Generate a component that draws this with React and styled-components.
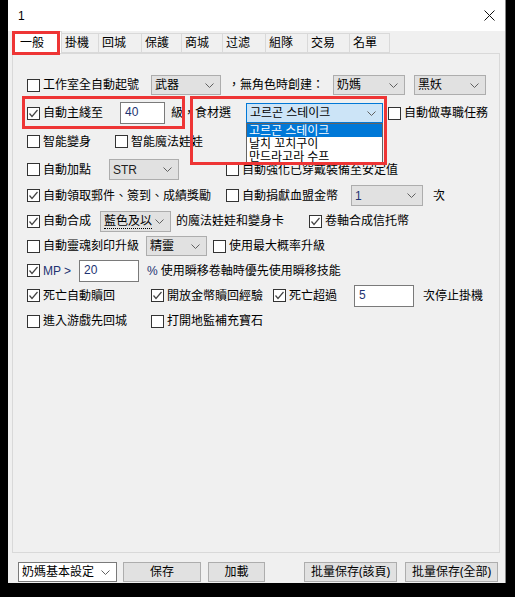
import React from "react";
import styled, { createGlobalStyle, css } from "styled-components";

const FONT = `"Noto Sans", "Noto Sans CJK TC", "Noto Sans CJK KR", sans-serif`;

const GlobalStyle = createGlobalStyle`
  html, body {
    margin: 0;
    padding: 0;
    background: #000;
  }
  body {
    padding-left: 8px;
    font-family: ${FONT};
    font-size: 12px;
    color: #000;
  }
`;

const Window = styled.div`
  position: relative;
  width: 498px;
  height: 583px;
  background: #f0f0f0;
  display: flex;
  flex-direction: column;
  box-sizing: border-box;
  border-right: 1px solid #888;
`;

const TitleBar = styled.div`
  height: 31px;
  background: #fff;
  display: flex;
  align-items: center;
  justify-content: space-between;
  padding: 0 10px 0 10px;
  font-family: "Liberation Sans", sans-serif;
  font-size: 12px;
`;

const Tabs = styled.div`
  display: flex;
  align-items: flex-end;
  height: 22px;
  margin-left: 6px;
  margin-top: 0;
`;

const Tab = styled.div`
  box-sizing: border-box;
  width: ${(p) => p.$w}px;
  height: ${(p) => (p.$active ? 22 : 20)}px;
  display: flex;
  align-items: center;
  padding-left: ${(p) => (p.$active ? 5 : 3)}px;
  background: ${(p) => (p.$active ? "#fff" : "#f0f0f0")};
  border: 1px solid #d9d9d9;
  border-bottom: ${(p) => (p.$active ? "none" : "1px solid #d9d9d9")};
  border-left: ${(p) => (p.$first || p.$active ? "1px solid #d9d9d9" : "none")};
  font-size: 12px;
  line-height: 14px;
`;

const Panel = styled.div`
  box-sizing: border-box;
  margin-left: 4px;
  width: 488px;
  height: 500px;
  border: 1px solid #d9d9d9;
  border-top-color: #d9d9d9;
  padding: 17px 0 0 14px;
  display: flex;
  flex-direction: column;
`;

const Row = styled.div`
  display: flex;
  align-items: center;
  height: ${(p) => p.$h}px;
`;

const CheckWrap = styled.label`
  display: flex;
  align-items: center;
  flex-shrink: 0;
  width: ${(p) => (p.$w ? `${p.$w}px` : "auto")};
  margin-left: ${(p) => p.$ml || 0}px;
  line-height: 14px;
  white-space: nowrap;
`;

const Box = styled.span`
  box-sizing: border-box;
  width: 13px;
  height: 13px;
  border: 1px solid #333;
  background: #fff;
  margin-right: 3px;
  display: flex;
  align-items: center;
  justify-content: center;
`;

const Latin = styled.span`
  font-family: "Liberation Sans", sans-serif;
  color: #1d3372;
`;

const Text = styled.span`
  flex-shrink: 0;
  width: ${(p) => (p.$w ? `${p.$w}px` : "auto")};
  margin-left: ${(p) => p.$ml || 0}px;
  line-height: 14px;
  white-space: nowrap;
`;

const selectLook = {
  plain: css`
    background: #e1e1e1;
    border: 1px solid #adadad;
  `,
  focus: css`
    background: #cce4f7;
    border: 1px solid #0078d7;
  `,
  white: css`
    background: #fff;
    border: 1px solid #7a7a7a;
  `,
};

const SelectBox = styled.div`
  box-sizing: border-box;
  flex-shrink: 0;
  width: ${(p) => p.$w}px;
  height: ${(p) => p.$h || 20}px;
  margin-left: ${(p) => p.$ml || 0}px;
  display: flex;
  align-items: center;
  justify-content: space-between;
  padding: 0 6px 0 3px;
  line-height: 14px;
  white-space: nowrap;
  ${(p) => selectLook[p.$look || "plain"]}
`;

const SelectValue = styled.span`
  ${(p) =>
    p.$dotted &&
    css`
      border-bottom: 1px dotted #000;
    `}
`;

const Input = styled.div`
  box-sizing: border-box;
  flex-shrink: 0;
  width: ${(p) => p.$w}px;
  height: 22px;
  margin-left: ${(p) => p.$ml || 0}px;
  background: #fff;
  border: 1px solid #7a7a7a;
  padding: 2px 0 0 4px;
  font-family: "Liberation Sans", sans-serif;
  font-size: 12px;
  line-height: 14px;
  color: #1d3372;
`;

const BottomBar = styled.div`
  display: flex;
  align-items: center;
  height: 20px;
  margin-top: 9px;
  padding-left: 10px;
`;

const Button = styled.div`
  box-sizing: border-box;
  flex-shrink: 0;
  width: ${(p) => p.$w}px;
  height: 20px;
  margin-left: ${(p) => p.$ml || 0}px;
  background: #e1e1e1;
  border: 1px solid #adadad;
  display: flex;
  align-items: center;
  justify-content: center;
  line-height: 14px;
`;

const Mark = styled.div`
  position: absolute;
  left: ${(p) => p.$x}px;
  top: ${(p) => p.$y}px;
  width: ${(p) => p.$w}px;
  height: ${(p) => p.$h}px;
  box-sizing: border-box;
  border: 3px solid #ee3535;
  pointer-events: none;
`;

const DropList = styled.div`
  position: absolute;
  left: 238px;
  top: 123px;
  width: 137px;
  box-sizing: border-box;
  background: #fff;
  border: 1px solid #646464;
  display: flex;
  flex-direction: column;
`;

const DropItem = styled.div`
  height: 13px;
  line-height: 13px;
  padding-left: 2px;
  font-size: 12px;
  background: ${(p) => (p.$active ? "#0078d7" : "#fff")};
  color: ${(p) => (p.$active ? "#fff" : "#000")};
`;

const Chevron = () => (
  <svg width="9" height="5" viewBox="0 0 9 5">
    <path d="M0.5 0.5 L4.5 4.5 L8.5 0.5" fill="none" stroke="#606060" strokeWidth="1" />
  </svg>
);

const Close = () => (
  <svg width="11" height="11" viewBox="0 0 11 11">
    <path d="M0.5 0.5 L10.5 10.5 M10.5 0.5 L0.5 10.5" stroke="#111" strokeWidth="1" />
  </svg>
);

const Check = ({ checked, w, ml, children }) => (
  <CheckWrap $w={w} $ml={ml}>
    <Box>
      {checked && (
        <svg width="11" height="11" viewBox="0 0 11 11">
          <polyline points="1.5,5.5 4,8.5 9.5,2" fill="none" stroke="#444" strokeWidth="1.2" />
        </svg>
      )}
    </Box>
    {children}
  </CheckWrap>
);

const Select = ({ w, h, ml, look, dotted, children }) => (
  <SelectBox $w={w} $h={h} $ml={ml} $look={look}>
    <SelectValue $dotted={dotted}>{children}</SelectValue>
    <Chevron />
  </SelectBox>
);

const tabs = [
  ["一般", 48],
  ["掛機", 37],
  ["回城", 43],
  ["保護", 40],
  ["商城", 41],
  ["过滤", 43],
  ["組隊", 42],
  ["交易", 42],
  ["名單", 40],
];

export default function App() {
  return (
    <>
      <GlobalStyle />
      <Window>
        <TitleBar>
          <span>1</span>
          <Close />
        </TitleBar>
        <Tabs>
          {tabs.map(([name, w], i) => (
            <Tab key={name} $w={w} $active={i === 0} $first={i === 0}>
              {name}
            </Tab>
          ))}
        </Tabs>
        <Panel>
          <Row $h={28}>
            <Check w={124}>工作室全自動起號</Check>
            <Select w={70}>武器</Select>
            <Text $ml={7} $w={105}>，無角色時創建：</Text>
            <Select w={72}>奶媽</Select>
            <Select w={72} ml={9}>黑妖</Select>
          </Row>
          <Row $h={28}>
            <Check checked w={93}>自動主綫至</Check>
            <Input $w={45}>40</Input>
            <Text $ml={6} $w={75}>級，食材選</Text>
            <Select w={137} look="focus">고르곤 스테이크</Select>
            <Check ml={5}>自動做專職任務</Check>
          </Row>
          <Row $h={29}>
            <Check w={88}>智能變身</Check>
            <Check>智能魔法娃娃</Check>
          </Row>
          <Row $h={27}>
            <Check w={82}>自動加點</Check>
            <Select w={70} h={21}><Latin style={{ color: "#222" }}>STR</Latin></Select>
            <Check ml={47}>自動強化已穿戴裝備至安定值</Check>
          </Row>
          <Row $h={25}>
            <Check checked w={199}>自動領取郵件、簽到、成績獎勵</Check>
            <Check w={125}>自動捐獻血盟金幣</Check>
            <Select w={72} h={21}><Latin>1</Latin></Select>
            <Text $ml={10}>次</Text>
          </Row>
          <Row $h={26}>
            <Check checked w={73}>自動合成</Check>
            <Select w={71} h={21} dotted>藍色及以</Select>
            <Text $ml={5} $w={133}>的魔法娃娃和變身卡</Text>
            <Check checked>卷軸合成信托幣</Check>
          </Row>
          <Row $h={24}>
            <Check w={119}>自動靈魂刻印升級</Check>
            <Select w={61}>精靈</Select>
            <Check ml={6}>使用最大概率升級</Check>
          </Row>
          <Row $h={25}>
            <Check checked w={52}><Latin>MP &gt;</Latin></Check>
            <Input $w={60}>20</Input>
            <Text $ml={8}><Latin>%</Latin> 使用瞬移卷軸時優先使用瞬移技能</Text>
          </Row>
          <Row $h={25}>
            <Check checked w={124}>死亡自動贖回</Check>
            <Check checked w={122}>開放金幣贖回經驗</Check>
            <Check checked w={81}>死亡超過</Check>
            <Input $w={60}>5</Input>
            <Text $ml={9}>次停止掛機</Text>
          </Row>
          <Row $h={26}>
            <Check w={124}>進入游戲先回城</Check>
            <Check>打開地監補充寶石</Check>
          </Row>
        </Panel>
        <BottomBar>
          <Select w={99} look="white">奶媽基本設定</Select>
          <Button $w={78} $ml={6}>保存</Button>
          <Button $w={57} $ml={7}>加載</Button>
          <Button $w={93} $ml={39}>批量保存(該頁)</Button>
          <Button $w={93} $ml={8}>批量保存(全部)</Button>
        </BottomBar>

        <DropList>
          <DropItem $active>고르곤 스테이크</DropItem>
          <DropItem>날치 꼬치구이</DropItem>
          <DropItem>만드라고라 수프</DropItem>
        </DropList>
        <Mark $x={4} $y={31} $w={48} $h={24} />
        <Mark $x={14} $y={96} $w={163} $h={33} />
        <Mark $x={182} $y={96} $w={197} $h={69} />
      </Window>
    </>
  );
}
